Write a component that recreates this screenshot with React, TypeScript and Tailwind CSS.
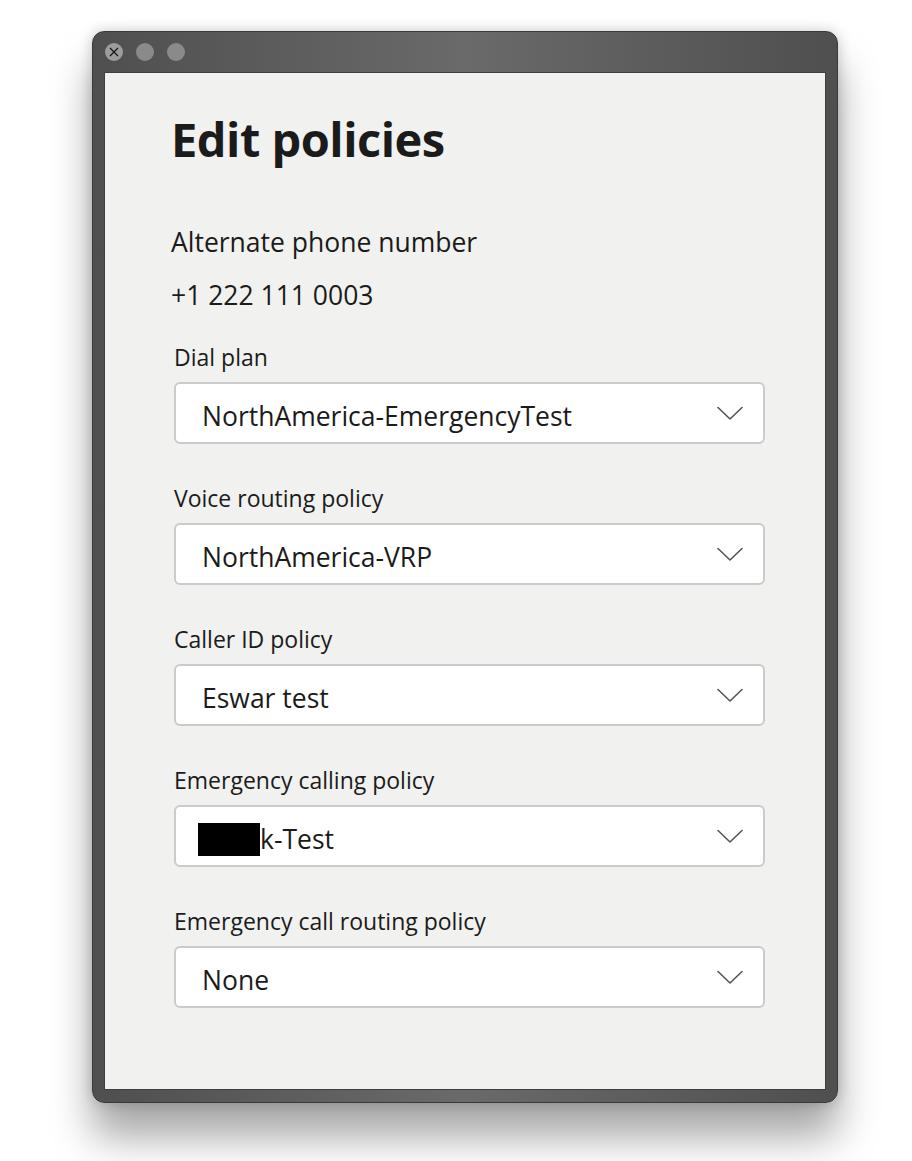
import React from 'react';

const fields = [
  { label: 'Dial plan', value: 'NorthAmerica-EmergencyTest' },
  { label: 'Voice routing policy', value: 'NorthAmerica-VRP' },
  { label: 'Caller ID policy', value: 'Eswar test' },
  { label: 'Emergency calling policy', value: 'k-Test', redacted: true },
  { label: 'Emergency call routing policy', value: 'None' },
];

const Chevron: React.FC = () => (
  <svg width="26" height="15" viewBox="0 0 26 15" fill="none" className="shrink-0">
    <path d="M1 1.5 L13 13 L25 1.5" stroke="#555" strokeWidth="1.6" strokeLinecap="round" strokeLinejoin="round" />
  </svg>
);

export default function App() {
  return (
    <div className="w-[912px] h-[1161px] bg-white pl-[92px] pt-[31px] font-['Open_Sans',sans-serif] text-[#1b1b1b]">
      {/* Window frame */}
      <div className="w-[746px] h-[1072px] rounded-[12px] bg-gradient-to-r from-[#4f4f4f] via-[#6a6a6a] to-[#4f4f4f] flex flex-col shadow-[0_34px_40px_rgba(0,0,0,0.35),0_0_14px_rgba(0,0,0,0.2)] border border-[#3a3a3a]">
        {/* Title bar */}
        <div className="h-[40px] flex items-center gap-[13px] pl-[12px]">
          <div className="w-[18px] h-[18px] rounded-full bg-[#9c9c9c] flex items-center justify-center">
            <svg width="10" height="10" viewBox="0 0 10 10">
              <path d="M1 1 L9 9 M9 1 L1 9" stroke="#1a1a1a" strokeWidth="1.3" />
            </svg>
          </div>
          <div className="w-[18px] h-[18px] rounded-full bg-[#8a8a8a]" />
          <div className="w-[18px] h-[18px] rounded-full bg-[#8a8a8a]" />
        </div>

        {/* Content */}
        <div className="flex-1 mx-[11px] mb-[12px] bg-[#f1f1ef] border border-[#3f3f3f] pl-[66px] pr-[60px] pt-[36px]">
          <h1 className="text-[47px] leading-[60px] font-bold tracking-[-0.5px]">Edit policies</h1>

          <div className="mt-[55px] text-[26.5px] leading-[36px]">Alternate phone number</div>
          <div className="mt-[17px] text-[26.5px] leading-[36px]">+1 222 111 0003</div>

          <div className="mt-[29px] pl-[3px] flex flex-col gap-[39px]">
            {fields.map((f) => (
              <div key={f.label} className="flex flex-col">
                <div className="text-[23px] leading-[30px] mb-[10px]">{f.label}</div>
                <div className="h-[62px] bg-white border-2 border-[#cbcbcb] rounded-[6px] flex items-center justify-between pl-[26px] pr-[20px]">
                  <span className="text-[26.5px] leading-[36px] flex items-center pt-[5px]">
                    {f.redacted && <span className="inline-block w-[62px] h-[33px] bg-black mt-[2px] ml-[-4px]" />}
                    {f.value}
                  </span>
                  <Chevron />
                </div>
              </div>
            ))}
          </div>
        </div>
      </div>
    </div>
  );
}
